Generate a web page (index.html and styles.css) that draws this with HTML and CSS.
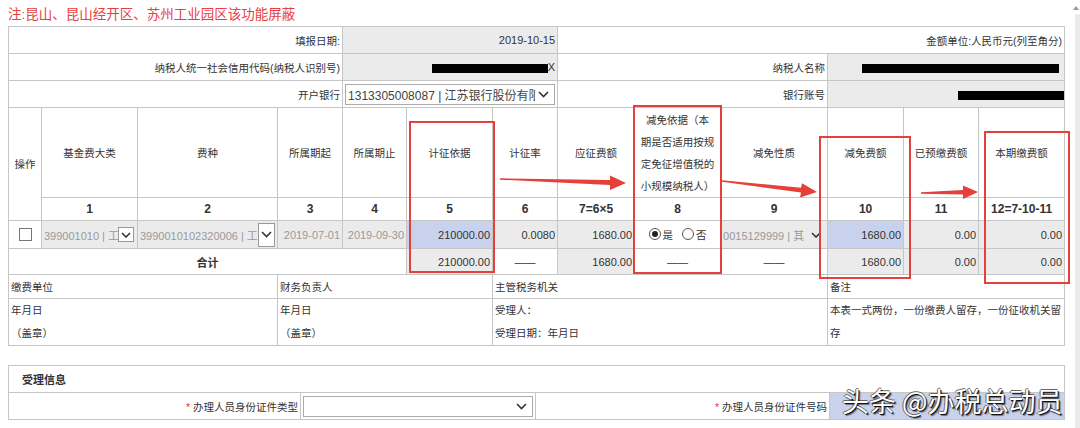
FILE: index.html
```html
<!DOCTYPE html>
<html lang="zh-CN">
<head>
  <meta charset="UTF-8">
  <meta name="viewport" content="width=device-width, initial-scale=1.0">
  <title>工会经费申报</title>
  <link rel="stylesheet" href="styles.css">
</head>
<body>
  <div class="page">
    <div class="notice">注:昆山、昆山经开区、苏州工业园区该功能屏蔽</div>

    <table class="form-table">
      <colgroup>
        <col class="w33"><col class="w96"><col class="w140"><col class="w65"><col class="w64">
        <col class="w86"><col class="w65"><col class="w77"><col class="w86"><col class="w107">
        <col class="w76"><col class="w75"><col class="w86">
      </colgroup>

      <tr class="row-info">
        <td colspan="4" class="label">填报日期:</td>
        <td colspan="3" class="value grey">2019-10-15</td>
        <td colspan="6" class="label unit">金额单位:人民币元(列至角分)</td>
      </tr>
      <tr class="row-info">
        <td colspan="4" class="label">纳税人统一社会信用代码(纳税人识别号)</td>
        <td colspan="3" class="value grey"><span class="mask mask-id"></span>X</td>
        <td colspan="3" class="label">纳税人名称</td>
        <td colspan="3" class="value grey"><span class="mask mask-name"></span></td>
      </tr>
      <tr class="row-info">
        <td colspan="4" class="label">开户银行</td>
        <td colspan="3" class="select-cell">
          <div class="select">
            <span class="select-text">1313305008087 | 江苏银行股份有限公</span>
            <svg class="chev" width="11" height="7" viewBox="0 0 11 7"><polyline points="1,1 5.5,5.5 10,1"/></svg>
          </div>
        </td>
        <td colspan="3" class="label">银行账号</td>
        <td colspan="3" class="value grey"><span class="mask mask-acct"></span></td>
      </tr>

      <tr class="row-head">
        <th rowspan="2">操作</th>
        <th>基金费大类</th>
        <th>费种</th>
        <th>所属期起</th>
        <th>所属期止</th>
        <th>计征依据</th>
        <th>计征率</th>
        <th>应征费额</th>
        <th class="multi">减免依据（本<br>期是否适用按规<br>定免征增值税的<br>小规模纳税人）</th>
        <th>减免性质</th>
        <th>减免费额</th>
        <th>已预缴费额</th>
        <th>本期缴费额</th>
      </tr>
      <tr class="row-num">
        <td>1</td><td>2</td><td>3</td><td>4</td><td>5</td><td>6</td>
        <td>7=6×5</td><td>8</td><td>9</td><td>10</td><td>11</td><td>12=7-10-11</td>
      </tr>

      <tr class="row-data">
        <td class="center"><span class="checkbox"></span></td>
        <td class="grey tight">
          <div class="combo">
            <span class="combo-text">399001010 | 工</span>
            <span class="combo-btn"><svg class="chev" width="10" height="6" viewBox="0 0 10 6"><polyline points="1,1 5,5 9,1"/></svg></span>
          </div>
        </td>
        <td class="grey tight">
          <div class="combo">
            <span class="combo-text">3990010102320006 | 工</span>
            <span class="combo-btn tall"><svg class="chev" width="11" height="7" viewBox="0 0 11 7"><polyline points="1,1 5.5,5.5 10,1"/></svg></span>
          </div>
        </td>
        <td class="grey date">2019-07-01</td>
        <td class="grey date">2019-09-30</td>
        <td class="blue num">210000.00</td>
        <td class="grey num">0.0080</td>
        <td class="grey num">1680.00</td>
        <td class="center">
          <span class="choice"><span class="radio on"></span>是</span>
          <span class="choice"><span class="radio"></span>否</span>
        </td>
        <td class="grey tight">
          <div class="combo">
            <span class="combo-text">0015129999 | 其</span>
            <svg class="chev" width="10" height="6" viewBox="0 0 10 6"><polyline points="1,1 5,5 9,1"/></svg>
          </div>
        </td>
        <td class="blue num">1680.00</td>
        <td class="grey num">0.00</td>
        <td class="grey num">0.00</td>
      </tr>

      <tr class="row-total">
        <td colspan="5" class="center bold">合计</td>
        <td class="grey num">210000.00</td>
        <td class="center">——</td>
        <td class="grey num">1680.00</td>
        <td class="center">——</td>
        <td class="center">——</td>
        <td class="grey num">1680.00</td>
        <td class="grey num">0.00</td>
        <td class="grey num">0.00</td>
      </tr>

      <tr class="row-sign-title">
        <td colspan="3">缴费单位</td>
        <td colspan="3">财务负责人</td>
        <td colspan="4">主管税务机关</td>
        <td colspan="3">备注</td>
      </tr>
      <tr class="row-sign">
        <td colspan="3">年月日<br>（盖章）</td>
        <td colspan="3">年月日<br>（盖章）</td>
        <td colspan="4">受理人：<br>受理日期：年月日</td>
        <td colspan="3" class="note">本表一式两份，一份缴费人留存，一份征收机关留存</td>
      </tr>
    </table>

    <table class="accept-table">
      <colgroup>
        <col class="w292"><col class="w235"><col class="w294"><col class="w235">
      </colgroup>
      <tr class="row-accept-title">
        <td colspan="4">受理信息</td>
      </tr>
      <tr class="row-accept">
        <td class="label"><span class="req">*</span> 办理人员身份证件类型</td>
        <td class="select-cell">
          <div class="select">
            <span class="select-text"></span>
            <svg class="chev" width="11" height="7" viewBox="0 0 11 7"><polyline points="1,1 5.5,5.5 10,1"/></svg>
          </div>
        </td>
        <td class="label"><span class="req">*</span> 办理人员身份证件号码</td>
        <td class="blue"></td>
      </tr>
    </table>

    <!-- annotations drawn over the screenshot -->
    <svg class="marks" width="1072" height="428" viewBox="0 0 1072 428">
      <g fill="none" stroke="#e5403a" stroke-width="2">
        <rect x="410" y="122" width="84" height="150"/>
        <rect x="634" y="106" width="87" height="167"/>
        <rect x="820" y="137" width="90" height="141"/>
        <rect x="985" y="132" width="84" height="151"/>
      </g>
      <g fill="#e5403a">
        <polygon points="500,178.3 610,180 610,175.5 626,183 610,190 610,185 500,179.7"/>
        <polygon points="722,180.3 801,187.7 802,183.3 817,192 800,197.5 801,192.5 722,181.7"/>
        <polygon points="921,192.3 963,190 963,185.5 978,192 963,199 963,194.5 921,193.7"/>
      </g>
    </svg>

    <div class="watermark">头条 @办税总动员</div>
  </div>
  <div class="scrollbar">
    <span class="scroll-up"></span>
  </div>
</body>
</html>
```

FILE: styles.css
```css
body {
  margin: 0;
  font-family: "Liberation Sans", "Noto Sans CJK SC", sans-serif;
  font-size: 10.5px;
  color: #333;
  background-color: #fff;
  display: flex;
  height: 428px;
  overflow: hidden;
}

.page {
  position: relative;
  width: 1072px;
  padding-left: 8px;
  box-sizing: border-box;
}

.notice {
  height: 26px;
  box-sizing: border-box;
  padding-top: 7px;
  font-size: 13.5px;
  line-height: 16px;
  color: #e8403f;
}

/* tables */
.form-table,
.accept-table {
  width: 1056px;
  border-collapse: collapse;
  table-layout: fixed;
}

.form-table td,
.form-table th,
.accept-table td {
  border: 1px solid #c6c6c6;
  padding: 0 2px;
  white-space: nowrap;
  overflow: hidden;
  vertical-align: middle;
}

.w33 { width: 33px; }
.w96 { width: 96px; }
.w140 { width: 140px; }
.w65 { width: 65px; }
.w64 { width: 64px; }
.w86 { width: 86px; }
.w77 { width: 77px; }
.w107 { width: 107px; }
.w76 { width: 76px; }
.w75 { width: 75px; }
.w292 { width: 292px; }
.w235 { width: 235px; }
.w294 { width: 294px; }

.grey { background-color: #ebebeb; }
.blue { background-color: #c9d2ed; }
.center { text-align: center; }
.bold { font-weight: bold; font-size: 11px; }

.label {
  text-align: right;
  padding-right: 1px;
}

.unit { padding-right: 9px; }

.value {
  text-align: right;
  font-size: 11px;
  padding-right: 1px;
}

.mask {
  display: inline-block;
  height: 9px;
  background-color: #000;
  vertical-align: middle;
}

.mask-id { width: 116px; }
.mask-name { width: 197px; margin-right: 3px; }
.mask-acct { width: 106px; margin-right: -2px; }

.row-info td { height: 26px; }

/* select boxes */
.select-cell { padding: 0 1px; }

.select {
  display: flex;
  align-items: center;
  height: 21px;
  border: 1px solid #a9a9a9;
  background-color: #fff;
  padding-left: 2px;
  box-sizing: border-box;
}

.select-text {
  flex: 1;
  overflow: hidden;
  white-space: nowrap;
  font-size: 12px;
  color: #444;
}

.chev polyline {
  fill: none;
  stroke: #333;
  stroke-width: 1.6;
}

.select .chev { margin: 0 5px 0 3px; }

/* header */
.row-head th {
  height: 89px;
  font-weight: normal;
  line-height: 22px;
  text-align: center;
}

.row-num td {
  height: 22px;
  text-align: center;
  font-weight: bold;
  font-size: 12px;
}

/* data rows */
.row-data td { height: 27px; }
.row-total td { height: 25px; }

.num {
  text-align: right;
  font-size: 11px;
  padding-right: 1px;
}

.date {
  text-align: right;
  font-size: 11px;
  color: #999;
}

.tight { padding: 0 0 0 2px; }

.combo {
  display: flex;
  align-items: center;
}

.combo-text {
  flex: 1;
  overflow: hidden;
  white-space: nowrap;
  font-size: 11px;
  color: #999;
}

.combo > .chev { margin: 0 4px 0 2px; }

.combo-btn {
  width: 16px;
  height: 15px;
  margin-right: 1px;
  border: 1px solid #999;
  background-color: #fff;
  display: flex;
  align-items: center;
  justify-content: center;
  box-sizing: border-box;
}

.combo-btn.tall {
  width: 17px;
  height: 24px;
  margin-right: 0;
}

.checkbox {
  display: inline-block;
  width: 11px;
  height: 11px;
  border: 1px solid #777;
  background-color: #fff;
  vertical-align: middle;
}

.choice {
  display: inline-flex;
  align-items: center;
  gap: 2px;
  margin: 0 3px;
}

.radio {
  display: inline-block;
  position: relative;
  width: 10px;
  height: 10px;
  border: 1px solid #555;
  border-radius: 50%;
  background-color: #fff;
}

.radio.on::after {
  content: "";
  position: absolute;
  left: 2px;
  top: 2px;
  width: 6px;
  height: 6px;
  border-radius: 50%;
  background-color: #222;
}

/* signature block */
.row-sign-title td { height: 23px; }

.row-sign td {
  height: 45px;
  line-height: 23px;
  white-space: normal;
}

.note { padding-right: 0; }

/* accept info */
.accept-table { margin-top: 19px; }

.row-accept-title td {
  height: 26px;
  padding-left: 13px;
  font-weight: bold;
  font-size: 11px;
}

.row-accept td { height: 26px; }

.req { color: #e5403a; }

/* overlays */
.marks {
  position: absolute;
  left: 0;
  top: 0;
  pointer-events: none;
}

.watermark {
  position: absolute;
  left: 842px;
  top: 384px;
  font-family: "Noto Sans CJK SC", sans-serif;
  font-size: 27px;
  line-height: 34px;
  color: #fff;
  white-space: nowrap;
  text-shadow: 1px 1px 0 #111, 2px 2px 1px rgba(0, 0, 0, 0.45), -1px 0 0 #666, 0 -1px 0 #666;
}

.scrollbar {
  width: 8px;
  display: flex;
  flex-direction: column;
  align-items: flex-end;
}

.scroll-up {
  width: 0;
  height: 0;
  margin: 6px 1px 4px 0;
  border-left: 3px solid transparent;
  border-right: 3px solid transparent;
  border-bottom: 4px solid #999;
}

.scrollbar::after {
  content: "";
  flex: 1;
  width: 5px;
  background-color: #ebebeb;
}
```
